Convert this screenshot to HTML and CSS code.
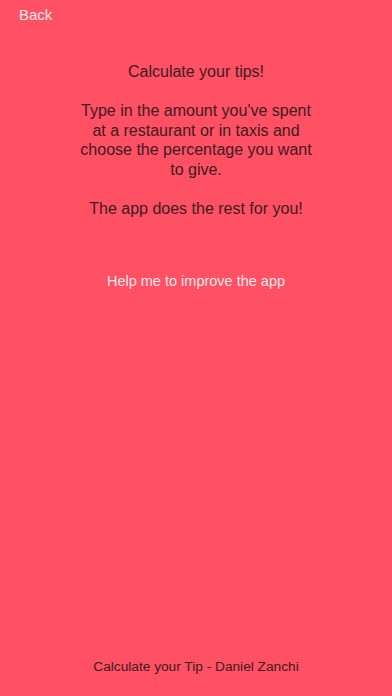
FILE: index.html
```html
<!DOCTYPE html>
<html lang="en">

<head>
    <meta charset="UTF-8">
    <meta name="viewport" content="width=device-width, initial-scale=1.0">
    <title>Calculate your Tip | Info</title>
    <link rel="stylesheet" href="styles.css">
</head>

<body>
    <div class="page">
        <!-- Nav -->
        <div class="nav">
            <a class="back" href="#">Back</a>
        </div>

        <!-- Info text -->
        <div class="info">
            <p>Calculate your tips!</p>
            <p>Type in the amount you've spent<br>at a restaurant or in taxis and<br>choose the percentage you want<br>to give.</p>
            <p>The app does the rest for you!</p>
        </div>

        <a class="help" href="#">Help me to improve the app</a>

        <div class="footer">Calculate your Tip - Daniel Zanchi</div>
    </div>
</body>

</html>
```

FILE: styles.css
```css
body {
    font-family: "Liberation Sans", Arial, sans-serif;
    margin: 0;
    padding: 0;
    background-color: #ff5064;
}

.page {
    height: 696px;
    display: flex;
    flex-direction: column;
    align-items: center;
    text-align: center;
}

.nav {
    align-self: stretch;
    text-align: left;
    padding: 5px 19px 0;
    height: 26px;
}

a {
    text-decoration: none;
}

.back {
    color: #fde8ea;
    font-size: 15px;
    line-height: 20px;
}

.info {
    margin-top: 31px;
    color: #3b1d22;
    font-size: 16px;
    line-height: 19.5px;
}

.info p {
    margin: 0 0 19.5px;
}

.help {
    margin-top: 33px;
    color: #fde8ea;
    font-size: 14.5px;
    line-height: 20px;
}

.footer {
    margin-top: auto;
    margin-bottom: 20px;
    color: #3b1d22;
    font-size: 13.7px;
    line-height: 18px;
}
```
